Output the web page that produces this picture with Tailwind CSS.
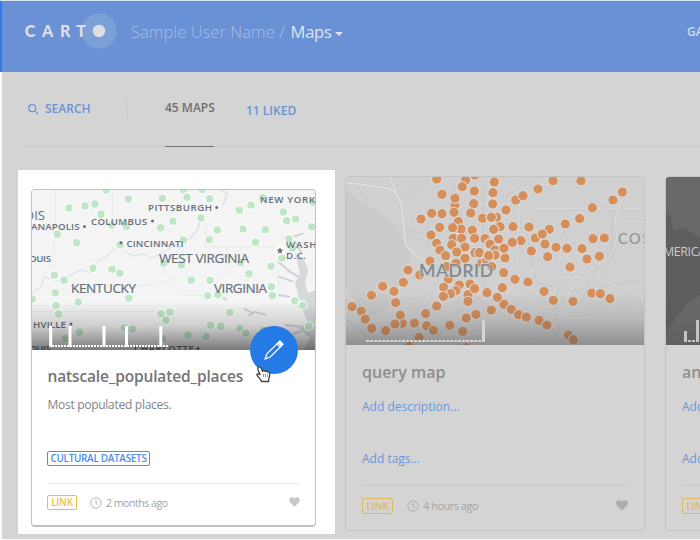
<!DOCTYPE html>
<html lang="en">
<head>
<meta charset="utf-8">
<title>Maps</title>
<script src="https://cdn.jsdelivr.net/npm/@tailwindcss/browser@4"></script>
</head>
<body class="bg-[#fafafa] overflow-hidden">
<svg width="0" height="0" class="absolute">
  <defs>
    <marker id="g" markerUnits="userSpaceOnUse" markerWidth="36" markerHeight="36" refX="18" refY="18"><circle cx="18" cy="18" r="15" fill="#fbfdfb"/><circle cx="18" cy="18" r="11.3" fill="#c0e5c7"/></marker>
    <marker id="o" markerUnits="userSpaceOnUse" markerWidth="38" markerHeight="38" refX="19" refY="19"><circle cx="19" cy="19" r="17" fill="#dadada"/><circle cx="19" cy="19" r="13.8" fill="#d68f5b"/></marker>
    <linearGradient id="shade" x1="0" y1="0" x2="0" y2="1"><stop offset="0" stop-color="#000" stop-opacity="0"/><stop offset=".5" stop-color="#000" stop-opacity=".16"/><stop offset="1" stop-color="#000" stop-opacity=".5"/></linearGradient>
    <linearGradient id="shade2" x1="0" y1="0" x2="0" y2="1"><stop offset="0" stop-color="#444" stop-opacity="0"/><stop offset=".5" stop-color="#444" stop-opacity=".16"/><stop offset="1" stop-color="#444" stop-opacity=".46"/></linearGradient>
    <symbol id="heart" viewBox="0 0 12 11"><path d="M6 10.6 1.1 5.8C-.3 4.3 0 1.8 1.4.8 3-.2 5 .2 6 1.9 7-.2 9-.2 10.6.8 12 1.8 12.3 4.3 10.9 5.8Z" fill="currentColor"/></symbol>
    <symbol id="clock" viewBox="0 0 12 12"><circle cx="6" cy="6" r="5.2" fill="none" stroke="currentColor"/><path d="M6 2.7V6.3L8.1 8" fill="none" stroke="currentColor"/></symbol>
  </defs>
</svg>
<div class="w-[700px] h-[539px] border-t border-[#d3e8f3] flex flex-col overflow-hidden font-['Open_Sans',sans-serif]">
  <header class="h-[71px] shrink-0 bg-[#6a91d6] border-l-2 border-[#3478ee] flex items-start">
    <svg class="shrink-0 ml-[22px] mt-[10px]" width="94" height="40" viewBox="24 11 94 40">
      <circle cx="99" cy="31" r="17.7" fill="#7ba0d6"/>
      <circle cx="99" cy="31" r="6.2" fill="#dcdfe3"/>
      <text x="24.8 42 60 76.300" y="36.800" font-family="Lato,sans-serif" font-weight="900" font-size="16" fill="#dcdfe3">CART</text>
    </svg>
    <div class="ml-[13px] mt-[19px] leading-6 text-[16.5px] whitespace-nowrap flex items-center">
      <span class="text-[#a9bfe3] w-[159.5px] font-light tracking-[0.06px]">Sample User Name /</span>
      <span class="text-[#dfe4ec] w-[44.5px] tracking-[-0.2px]">Maps</span>
      <svg width="8" height="4" class="mt-[3px]"><path d="M0 0H8L4 4Z" fill="#dfe4ec"/></svg>
    </div>
    <span class="ml-auto w-[13px] mt-[21px] text-[12px] leading-5 font-semibold text-[#cdd8ea] whitespace-nowrap">GALLERY</span>
  </header>
  <main class="flex-1 bg-[#d4d4d4] border-l-2 border-[#fbfbfb]">
    <nav class="ml-[22px] h-[75px] border-b border-[#cbcbcb] flex items-start text-[12px] leading-5 font-semibold whitespace-nowrap">
      <svg class="ml-1 mt-8 shrink-0" width="11" height="11" viewBox="0 0 11 11" fill="none" stroke="#6b93d6" stroke-width="1.2"><circle cx="4.2" cy="4.2" r="3.5"/><path d="M6.8 6.8 10.4 10.4"/></svg>
      <span class="ml-[6px] mt-[27px] w-[82px] text-[#6b93d6]">SEARCH</span>
      <span class="mt-[27px] h-5 w-px bg-[#cbcbcb]"></span>
      <span class="ml-[37px] w-[49px] h-[75px] shrink-0 pt-[26px] text-[#6f6f6f] border-b border-[#6f726f]">45 MAPS</span>
      <span class="ml-[32px] mt-[29px] text-[#6b93d6]">11 LIKED</span>
    </nav>
    <div class="flex items-start pl-4">
      <section class="mt-[23px] w-[317px] h-[364px] shrink-0 bg-white pl-[13px] pt-[19px]">
        <article class="relative w-[285px] h-[338px] border border-[#c2c2c2] border-b-2 rounded-[4px]">
          <svg class="block rounded-t-[3px]" width="283" height="160" viewBox="32 190 283 160">
            <rect x="32" y="190" width="284" height="160" fill="#f4f4f4"/>
            <g transform="translate(18 170) scale(.33333)" fill="none" stroke-linejoin="round">
              <path d="M112 60V190L105 250 108 310M284 60V190M480 355 430 290M310 360 480 325M40 425H480M480 415H890M562 110V230H940M628 230V260L680 230M480 375H560L610 320 700 240M780 240V350" stroke="#e7e8ea" stroke-width="2"/>
              <path d="M40 372 70 350 78 320 125 335 165 310 190 300 215 308 245 270 270 255 300 228 320 246 345 258 375 252 400 264 430 250 480 220" stroke="#d3e0ea" stroke-width="3"/>
            </g>
            <g transform="translate(170 170) scale(.33333)" fill="none" stroke-linejoin="round">
              <path d="M150 60 172 70 160 105M93 144 82 180 60 205 25 235" stroke="#d3e0ea" stroke-width="4"/>
              <path d="M370 200 400 190M340 205 375 215 395 250M325 275 360 305 385 320M325 320 370 335M325 375 360 380M370 405 395 400M345 465 400 470M370 490 410 480M220 415 250 430 235 436M250 425 290 434M158 382 170 390" stroke="#cfd2d5" stroke-width="6"/>
              <path d="M375 250 400 265 415 300 405 340 415 370 437 360V540H400L420 505 385 475 412 455 400 425 372 400 385 375 375 340 390 310Z" fill="#d6d9dc"/>
            </g>
            <g transform="translate(18 170) scale(.33333)"><polyline fill="none" stroke="none" marker-start="url(#g)" marker-mid="url(#g)" marker-end="url(#g)" points="90,50 265,60 153,114 201,108 231,102 249,133 331,87 433,85 118,193 176,218 281,165 325,170 428,173 466,154 306,224 437,280 225,295 282,298 306,310 109,316 138,331 112,368 114,406 122,432 43,387 181,396 333,385 455,426 429,431 444,450 184,487 142,505 319,473 343,477 433,505"/></g>
            <g transform="translate(170 170) scale(.33333)"><polyline fill="none" stroke="none" marker-start="url(#g)" marker-mid="url(#g)" marker-end="url(#g)" points="41,60 51,82 97,58 119,86 208,121 243,105 278,83 9,154 93,144 142,180 118,209 40,210 219,177 286,179 257,217 340,126 350,152 377,147 425,170 430,97 357,207 367,234 327,240 336,264 303,289 34,285 212,278 237,311 64,331 120,331 113,377 144,374 304,350 307,377 374,392 398,406 0,426 179,427 122,466 152,469 209,475 228,489 281,480 54,495 109,499 416,468"/></g>
            <g fill="#66707b" font-family="'Open Sans',sans-serif" font-weight="600" font-size="9.7">
              <text x="24" y="219.500" font-size="12" font-weight="400" textLength="21" lengthAdjust="spacingAndGlyphs">OIS</text><text x="31" y="229.500" textLength="48.500">ANAPOLIS</text><text x="91" y="224.500" textLength="56">COLUMBUS</text><text x="148" y="211" textLength="64">PITTSBURGH</text><text x="260" y="203" textLength="55">NEW YORK</text><text x="126.500" y="246.500" textLength="57">CINCINNATI</text><text x="29" y="261.500" textLength="22">OUIS</text><text x="33" y="327.500" textLength="33">HVILLE</text><text x="286" y="247.500" textLength="34">WASH.</text><text x="286" y="259" textLength="20">D.C.</text><text x="29" y="352" textLength="22">OUIS</text><text x="134" y="352" textLength="60">CHARLOTTE</text>
              <g font-weight="400" font-size="13.500" stroke="#66707b" stroke-width=".2"><text x="71" y="292.500" textLength="65">KENTUCKY</text><text x="159" y="262.500" textLength="90">WEST VIRGINIA</text><text x="214" y="293" textLength="53">VIRGINIA</text></g>
              <circle cx="84.500" cy="226.500" r="1.500"/><circle cx="152.500" cy="221" r="1.500"/><circle cx="216.700" cy="207.500" r="1.500"/><circle cx="121" cy="242.700" r="1.500"/><circle cx="71" cy="324" r="1.500"/><circle cx="198" cy="348.500" r="1.500"/>
              <circle cx="280" cy="250.500" r="5" fill="#fff"/><path d="M280 247l1 2.500 2.500.2-2 1.700.7 2.500-2.200-1.400-2.200 1.400.7-2.500-2-1.700 2.500-.2Z"/>
            </g>
            <rect x="32" y="302" width="284" height="48" fill="url(#shade)"/>
            <path d="M52 346H168" stroke="#fff" stroke-width="2" stroke-dasharray="2 1"/>
            <path d="M50.700 326V347M70 326V347M104 326V347M126.500 326V347M160.800 326V347" stroke="#fff" stroke-width="3"/>
          </svg>
          <h2 class="ml-[15.5px] mt-[13.5px] text-[15.5px] tracking-[-0.15px] leading-6 font-semibold text-[#757575] whitespace-nowrap">natscale_populated_places</h2>
          <p class="ml-[15.5px] mt-[9px] text-[12px] tracking-[-0.28px] leading-4 text-[#7f8489]">Most populated places.</p>
          <div class="ml-[15px] mt-[38px] w-[103px] h-[15px] border border-[#4b8fe6] rounded-[2px] flex items-center justify-center text-[10px] tracking-[-0.33px] leading-3 font-semibold text-[#4b8fe6] whitespace-nowrap">CULTURAL DATASETS</div>
          <footer class="mx-[15px] mt-[17px] pt-[11px] border-t border-[#ededed] flex items-start">
            <span class="w-[30px] h-[15px] border border-[#f0bd3a] rounded-[2px] flex items-center justify-center text-[10px] tracking-[-0.3px] font-semibold text-[#efbf45]">LINK</span>
            <svg class="ml-[13px] mt-[2px] text-[#b9b9b9]" width="12" height="12"><use href="#clock"/></svg>
            <span class="ml-1 text-[10.5px] tracking-[-0.45px] leading-4 text-[#a2a2a2] whitespace-nowrap">2 months ago</span>
            <svg class="ml-auto mt-[2px] text-[#c8c8c8]" width="11" height="10"><use href="#heart"/></svg>
          </footer>
          <div class="absolute left-[218px] top-[136px] w-[48px] h-[48px] rounded-full bg-[#247be5] flex items-center justify-center">
            <svg width="20" height="20" viewBox="0 0 20 20" fill="none" stroke="#fff" stroke-width="1.300"><path d="M1.200 18.800 3 13.800 13 3.800 16.200 7 6.200 17Z"/><path d="M14.200 2.600 15.800 1 19 4.200 17.400 5.800Z" fill="#fff"/><path d="M13 3.800 14.200 2.600M16.200 7 17.400 5.800"/></svg>
          </div>
          <svg class="absolute left-[224px] top-[176px]" width="15" height="17" viewBox="0 0 15 17"><path d="M2.200 1.200C3.500.3 4.500 1 5 2L6.500 5.300 8 4.500 9.300 5.300 10.800 5 12 6 13.300 6.500C14.500 9 13.500 11 12.700 12.500V15.500H5.500C5 13 1.500 11 .8 8.500 1.500 7.300 3 8 4.200 9L1.700 3Z" fill="#fff" stroke="#444" stroke-width="1.300"/><path d="M7.500 8V11M9.500 8V11M11.500 8V11" stroke="#999"/></svg>
        </article>
      </section>
      <article class="ml-[10px] mt-[29px] w-[300px] h-[355px] shrink-0 border border-[#c3c3c3] rounded-[4px]">
        <svg class="block rounded-t-[3px]" width="298" height="168" viewBox="346 177 298 168">
          <rect x="346" y="177" width="299" height="168" fill="#cfd0cf"/>
          <g transform="translate(340 170) scale(.33333)" fill="none" stroke-linejoin="round">
            <path d="M18 60 60 95 85 115 160 165 200 225 215 260 150 400 100 440 60 420 18 350Z" fill="#cacbc9"/>
            <path d="M30 165 85 112 55 50M85 112 190 180 250 190 300 250M180 85 230 60 280 20M215 195 310 240 400 300M100 430 170 400 250 380M240 310 190 340 50 410M340 40 380 200 340 310M430 30V360M300 300 460 420M330 440 480 340M250 420 460 520M400 130 560 180 590 340 720 370M670 190 770 290 720 400M610 450 700 360 900 330M500 80 560 30M820 110 810 280 740 380M20 450 110 520M600 420 650 500M700 280 640 390 660 480" stroke="#c6c7c7" stroke-width="3"/>
            <g id="roads" stroke="#c4c6c6" stroke-width="10">
              <path d="M18 37 145 55Q165 62 175 85 186 105 188 140L196 220Q205 240 255 275M150 20 175 85"/>
              <path d="M265 270V395Q300 410 365 440L400 490H440L480 440 520 370M500 20Q530 60 540 110L530 290 630 318 700 323Q760 320 800 335L910 380 860 460 820 520M520 365Q555 360 570 380 590 420 620 425L730 435Q780 445 800 520M700 325 670 430Q660 470 560 520M690 20Q700 60 740 90L825 155H910M825 155 830 195Q825 250 800 270L700 325M825 155Q830 90 900 25M455 180 510 145Q560 110 590 115H910" stroke-width="8"/>
            </g>
            <path d="M18 37 145 55Q165 62 175 85 186 105 188 140L196 220Q205 240 255 275M150 20 175 85" stroke="#dcdcdc" stroke-width="7"/>
            <path d="M265 270V395Q300 410 365 440L400 490H440L480 440 520 370M500 20Q530 60 540 110L530 290 630 318 700 323Q760 320 800 335L910 380 860 460 820 520M520 365Q555 360 570 380 590 420 620 425L730 435Q780 445 800 520M700 325 670 430Q660 470 560 520M690 20Q700 60 740 90L825 155H910M825 155 830 195Q825 250 800 270L700 325M825 155Q830 90 900 25M455 180 510 145Q560 110 590 115H910" stroke="#d8d8d8" stroke-width="5"/>
          </g>
          <g transform="translate(340 170) scale(.33333)"><polyline fill="none" stroke="none" marker-start="url(#o)" marker-mid="url(#o)" marker-end="url(#o)" points="377,30 405,15 345,104 345,85 367,50 403,63 290,27 306,73 463,36 458,68 458,102 401,101 275,130 243,147 306,131 355,155 342,127 392,129 428,145 453,142 273,195 299,172 363,177 338,173 397,181 461,178 340,205 365,205 404,205 435,206 475,207 290,220 335,224 375,231 448,222 300,240 375,265 348,280 405,248 418,248 425,280 440,270 465,240 445,256 455,290 317,257 350,246 270,273 320,290 204,300 239,315 190,337 128,349 162,364 94,376 167,398 325,327 311,352 358,345 390,342 348,362 332,371 310,379 384,374 404,356 384,394 441,368 472,382 36,410 64,423 76,447 95,475 137,482 187,460 165,462 181,435 223,459 257,431 290,408 260,467 280,481 329,466 368,484 379,444 408,433 453,420 237,502 208,530 377,533"/></g>
          <g transform="translate(490 170) scale(.33333)"><polyline fill="none" stroke="none" marker-start="url(#o)" marker-mid="url(#o)" marker-end="url(#o)" points="13,36 9,68 8,102 20,142 4,142 30,170 11,178 26,207 0,222 15,240 15,255 -4,257 45,264 42,235 77,90 99,77 48,120 144,57 189,32 273,32 307,113 369,90 397,66 269,146 226,162 69,170 117,171 136,204 178,178 157,192 93,212 67,217 165,222 124,243 173,260 198,232 231,235 276,236 309,206 343,204 328,259 291,267 240,291 5,290 41,308 75,328 114,336 37,353 162,364 190,391 249,394 305,369 331,371 360,386 42,403 22,382 4,420 64,418 86,434 109,441 147,451 171,465 235,495 250,509"/></g>
          <text x="419" y="276.500" font-family="Lato,sans-serif" font-weight="600" font-size="17.500" fill="#848a90" stroke="#d0d0d0" stroke-width="1.500" paint-order="stroke" textLength="74">MADRID</text>
          <text x="618" y="244" font-family="Lato,sans-serif" font-size="14.500" fill="#8b8f93" textLength="41">COSL</text>
          <rect x="346" y="292" width="299" height="53" fill="url(#shade2)"/>
          <path d="M366 341H482" stroke="#d5d5d5" stroke-width="2" stroke-dasharray="3 1"/><path d="M483.500 320V342" stroke="#d5d5d5" stroke-width="3"/>
        </svg>
        <h2 class="ml-4 mt-[15px] text-[16px] leading-6 font-semibold text-[#8e8e8e]">query map</h2>
        <p class="ml-4 mt-[15px] text-[12px] leading-4 text-[#6c96d9]">Add description...</p>
        <p class="ml-4 mt-[36px] text-[12px] leading-4 text-[#6c96d9]">Add tags...</p>
        <footer class="ml-4 mr-4 mt-[18px] pt-[12px] border-t border-[#c8c8c8] flex items-start">
          <span class="w-[31px] h-[16px] border border-[#ddb65d] rounded-[2px] flex items-center justify-center text-[10px] font-semibold text-[#dcb864]">LINK</span>
          <svg class="ml-[14px] mt-[2px] text-[#aeaeae]" width="12" height="12"><use href="#clock"/></svg>
          <span class="ml-[4px] text-[11px] tracking-[-0.5px] leading-4 text-[#a5a5a5] whitespace-nowrap">4 hours ago</span>
          <svg class="ml-auto mt-[2px] text-[#acacac]" width="12" height="11"><use href="#heart"/></svg>
        </footer>
      </article>
      <article class="ml-[20px] mt-[29px] w-[300px] h-[355px] shrink-0 border border-[#c3c3c3] rounded-[4px]">
        <svg class="block rounded-tl-[3px]" width="298" height="168" viewBox="666 177 298 168">
          <rect x="666" y="177" width="298" height="168" fill="#69696a"/>
          <path d="M666 213 671 217 673 230 685 228 700 238V295L688 303 678 315 672 324 666 332Z" fill="#5e5e5e"/>
          <text x="663" y="256" font-family="'Open Sans',sans-serif" font-size="12.500" fill="#c9c9c9" textLength="43">MERICA</text>
          <rect x="666" y="292" width="298" height="53" fill="url(#shade2)" opacity=".5"/>
          <path d="M685.500 331V342M697.500 320V342" stroke="#c4c4c4" stroke-width="3"/><path d="M688 341H696" stroke="#c4c4c4" stroke-width="2" stroke-dasharray="3 1"/>
        </svg>
        <h2 class="ml-4 mt-[15px] text-[16px] leading-6 font-semibold text-[#8e8e8e]">animated map</h2>
        <p class="ml-4 mt-[15px] text-[12px] leading-4 text-[#6c96d9]">Add description...</p>
        <p class="ml-4 mt-[36px] text-[12px] leading-4 text-[#6c96d9]">Add tags...</p>
        <footer class="ml-4 mr-[17px] mt-[18px] pt-[12px] border-t border-[#c8c8c8] flex items-start">
          <span class="w-[31px] h-[16px] border border-[#ddb65d] rounded-[2px] flex items-center justify-center text-[10px] font-semibold text-[#dcb864]">LINK</span>
        </footer>
      </article>
    </div>
  </main>
</div>
</body>
</html>
